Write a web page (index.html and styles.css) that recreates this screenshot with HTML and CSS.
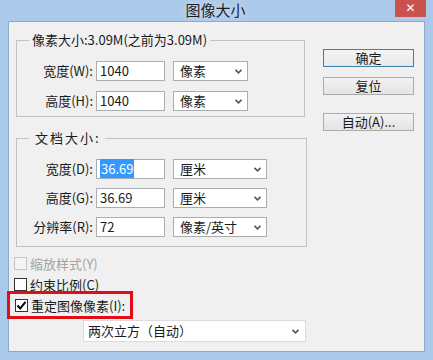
FILE: index.html
```html
<!DOCTYPE html>
<html lang="zh-CN">
<head>
    <meta charset="UTF-8">
    <title>图像大小</title>
    <link rel="stylesheet" href="styles.css">
</head>
<body>

<div class="window">
    <div class="titlebar">
        <span></span>
        <span class="title">图像大小</span>
        <span class="close">✕</span>
    </div>
    <div class="frame">
        <div class="client">
            <div class="main">
                <fieldset class="group g1">
                    <legend>像素大小:3.09M(之前为3.09M)</legend>
                    <div class="row">
                        <span class="label">宽度(W):</span>
                        <div class="input">1040</div>
                        <div class="select">像素<svg width="7" height="5" viewBox="0 0 7 5"><path d="M0.5 0.8 L3.5 3.8 L6.5 0.8" fill="none" stroke="#555" stroke-width="1.6"/></svg></div>
                    </div>
                    <div class="row">
                        <span class="label">高度(H):</span>
                        <div class="input">1040</div>
                        <div class="select">像素<svg width="7" height="5" viewBox="0 0 7 5"><path d="M0.5 0.8 L3.5 3.8 L6.5 0.8" fill="none" stroke="#555" stroke-width="1.6"/></svg></div>
                    </div>
                </fieldset>

                <fieldset class="group g2">
                    <legend>文档大小:</legend>
                    <div class="row">
                        <span class="label">宽度(D):</span>
                        <div class="input"><span class="sel">36.69</span></div>
                        <div class="select wide">厘米<svg width="7" height="5" viewBox="0 0 7 5"><path d="M0.5 0.8 L3.5 3.8 L6.5 0.8" fill="none" stroke="#555" stroke-width="1.6"/></svg></div>
                    </div>
                    <div class="row">
                        <span class="label">高度(G):</span>
                        <div class="input">36.69</div>
                        <div class="select wide">厘米<svg width="7" height="5" viewBox="0 0 7 5"><path d="M0.5 0.8 L3.5 3.8 L6.5 0.8" fill="none" stroke="#555" stroke-width="1.6"/></svg></div>
                    </div>
                    <div class="row">
                        <span class="label">分辨率(R):</span>
                        <div class="input">72</div>
                        <div class="select wide">像素/英寸<svg width="7" height="5" viewBox="0 0 7 5"><path d="M0.5 0.8 L3.5 3.8 L6.5 0.8" fill="none" stroke="#555" stroke-width="1.6"/></svg></div>
                    </div>
                </fieldset>

                <div class="check disabled">
                    <span class="box"></span>
                    <span>缩放样式(Y)</span>
                </div>
                <div class="check">
                    <span class="box"></span>
                    <span>约束比例(C)</span>
                </div>
                <div class="check marked">
                    <span class="box"><svg width="11" height="11" viewBox="0 0 11 11"><path d="M1.5 5.5 L4.2 8.5 L9.5 1.8" fill="none" stroke="#000" stroke-width="2"/></svg></span>
                    <span>重定图像像素(I):</span>
                </div>
                <div class="select method">两次立方（自动）<svg width="7" height="5" viewBox="0 0 7 5"><path d="M0.5 0.8 L3.5 3.8 L6.5 0.8" fill="none" stroke="#555" stroke-width="1.6"/></svg></div>
            </div>

            <div class="side">
                <button class="btn default">确定</button>
                <button class="btn">复位</button>
                <button class="btn auto">自动(A)...</button>
            </div>
        </div>
    </div>
</div>

</body>
</html>
```

FILE: styles.css
```css
body {
    margin: 0;
    font-family: "Noto Sans CJK SC", "Noto Sans", sans-serif;
    font-size: 13px;
    color: #1a1a1a;
}

.window {
    width: 433px;
    height: 360px;
    background-color: #abc9ea;
    display: flex;
    flex-direction: column;
}

.titlebar {
    height: 21px;
    display: grid;
    grid-template-columns: 1fr auto 1fr;
    align-items: start;
}

.title {
    font-size: 15px;
    line-height: 18px;
    padding-top: 1px;
    color: #1e1e1e;
    text-shadow: 0 0 6px #e4eefa;
    margin-left: -2px;
}

.close {
    justify-self: end;
    width: 31px;
    height: 17px;
    margin-right: 7px;
    background-color: #c9524d;
    color: #fff;
    font-size: 12px;
    line-height: 16px;
    text-align: center;
    font-family: "DejaVu Sans", sans-serif;
    font-weight: bold;
}

.frame {
    flex: 1;
    padding: 0 8px 8px 8px;
    display: flex;
}

.client {
    flex: 1;
    background-color: #f0f0f0;
    border: 1px solid #8fa9c8;
    padding: 10px 10px 0 7px;
    display: flex;
    gap: 16px;
}

.main {
    width: 291px;
    display: flex;
    flex-direction: column;
}

/* group boxes */
.group {
    margin: 0;
    padding: 13px 0 5px 12px;
    border: 1px solid #c2c2c2;
    box-sizing: border-box;
    display: flex;
    flex-direction: column;
    gap: 10px;
}

.group legend {
    padding: 0 3px;
    line-height: 16px;
}

.g1 {
    width: 289px;
}

.g2 {
    width: 291px;
    margin-top: 13px;
    padding-bottom: 9px;
    gap: 9px;
}

.g2 legend {
    padding: 0 4px 0 6px;
    letter-spacing: 2px;
}

.row {
    display: flex;
    align-items: center;
    height: 20px;
}

.label {
    width: 64px;
    margin-right: 3px;
    text-align: right;
    white-space: nowrap;
    line-height: 16px;
}

.input {
    width: 69px;
    height: 20px;
    box-sizing: border-box;
    border: 1px solid #abadb3;
    background-color: #fff;
    padding-left: 3px;
    line-height: 18px;
    margin-right: 8px;
}

.sel {
    background-color: #3399ff;
    color: #fff;
    padding: 0 1px;
}

.select {
    width: 75px;
    height: 20px;
    box-sizing: border-box;
    border: 1px solid #acacac;
    background-color: #fff;
    display: flex;
    align-items: center;
    justify-content: space-between;
    padding: 0 5px 0 6px;
    line-height: 18px;
}

.select.wide {
    width: 94px;
}

/* checkboxes */
.check {
    display: flex;
    align-items: center;
    gap: 3px;
    height: 21px;
    margin-left: -2px;
}

.check:first-of-type {
    margin-top: 6px;
}

.box {
    width: 13px;
    height: 13px;
    box-sizing: border-box;
    border: 1px solid #333;
    background-color: #fff;
    display: flex;
    align-items: center;
    justify-content: center;
}

.check.disabled {
    color: #a3a3a3;
}

.check.disabled .box {
    border-color: #c6c6c6;
    background-color: #f4f4f4;
}

.check.marked {
    width: 126px;
    height: 28px;
    box-sizing: border-box;
    border: 3px solid #e10d17;
    margin: -4px 0 0 -9px;
    padding-left: 5px;
}

.select.method {
    width: 223px;
    height: 22px;
    margin: 1px 0 0 67px;
    padding: 0 6px 0 4px;
    border-color: #dcdcdc;
}

/* buttons */
.side {
    width: 91px;
    padding-top: 17px;
    display: flex;
    flex-direction: column;
}

.btn {
    width: 91px;
    height: 18px;
    padding: 0;
    font-family: inherit;
    font-size: 13px;
    line-height: 16px;
    color: #1a1a1a;
    border: 1px solid #acacac;
    background: linear-gradient(#f2f2f2, #e4e4e4);
    margin-bottom: 10px;
}

.btn.default {
    border-color: #3c7fb1;
    background: linear-gradient(#f6f4f2, #ebe9e7);
}

.btn.auto {
    margin-top: 8px;
}
```
